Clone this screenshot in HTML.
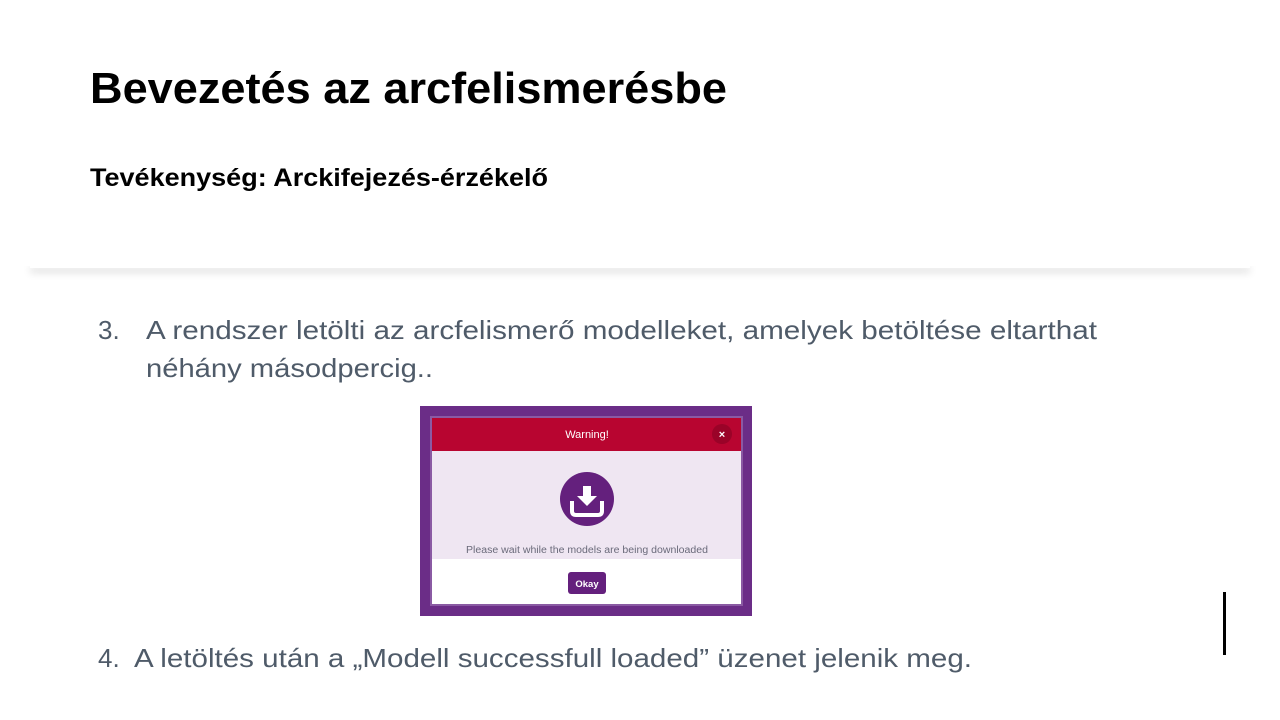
<!DOCTYPE html>
<html><head><meta charset="utf-8"><style>
body{margin:0;width:1280px;height:720px;background:#fff;position:relative;overflow:hidden;font-family:"Liberation Sans",sans-serif}
.shadow{position:absolute;left:30px;top:262px;width:1220px;height:6px;box-shadow:0 5px 8px rgba(0,0,0,0.12);background:#fff}
svg.t{position:absolute;left:0;top:0}
</style></head><body>
<div class="shadow"></div>
<svg class="t" width="1280" height="720" font-family="Liberation Sans, sans-serif">
<rect x="0" y="0" width="1280" height="266" fill="#fff"/>
<text x="90" y="103" font-size="44" font-weight="bold" fill="#000" textLength="637" lengthAdjust="spacingAndGlyphs">Bevezetés az arcfelismerésbe</text>
<text x="90" y="186" font-size="25" font-weight="bold" fill="#000" textLength="458" lengthAdjust="spacingAndGlyphs">Tevékenység: Arckifejezés-érzékelő</text>
<g fill="#4f5b69" font-size="26">
<text x="98" y="339">3.</text>
<text x="146" y="339" textLength="951" lengthAdjust="spacingAndGlyphs">A rendszer letölti az arcfelismerő modelleket, amelyek betöltése eltarthat</text>
<text x="146" y="377" textLength="287" lengthAdjust="spacingAndGlyphs">néhány másodpercig..</text>
<text x="98" y="667">4.</text>
<text x="134" y="667" textLength="838" lengthAdjust="spacingAndGlyphs">A letöltés után a „Modell successfull loaded” üzenet jelenik meg.</text>
</g>
<rect x="1223" y="592" width="3" height="63" fill="#000"/>
<rect x="420" y="406" width="332" height="210" fill="#6b2d87"/>
<rect x="430" y="416" width="313" height="190" fill="#8a5aa3"/>
<rect x="432" y="418" width="309" height="186" fill="#fff"/>
<rect x="432" y="418" width="309" height="33" fill="#b80530"/>
<text x="587" y="438" font-size="11" fill="#fff" text-anchor="middle">Warning!</text>
<circle cx="722" cy="434" r="10" fill="#9a0328"/>
<text x="722" y="438" font-size="11" font-weight="bold" fill="#fff" text-anchor="middle">×</text>
<rect x="432" y="451" width="309" height="108" fill="#efe6f2"/>
<circle cx="587" cy="499" r="27" fill="#64207d"/>
<path d="M583 486h8v10h6l-10 10-10-10h6z" fill="#fff"/>
<path d="M572 501v10q0 4 4 4h22q4 0 4-4v-10" fill="none" stroke="#fff" stroke-width="4"/>
<text x="466" y="553" font-size="10" fill="#6a6a7a" textLength="242" lengthAdjust="spacingAndGlyphs">Please wait while the models are being downloaded</text>
<rect x="568" y="572" width="38" height="22" rx="3" fill="#64207d"/>
<text x="587" y="587" font-size="9.5" font-weight="bold" fill="#fff" text-anchor="middle">Okay</text>
</svg>
</body></html>
